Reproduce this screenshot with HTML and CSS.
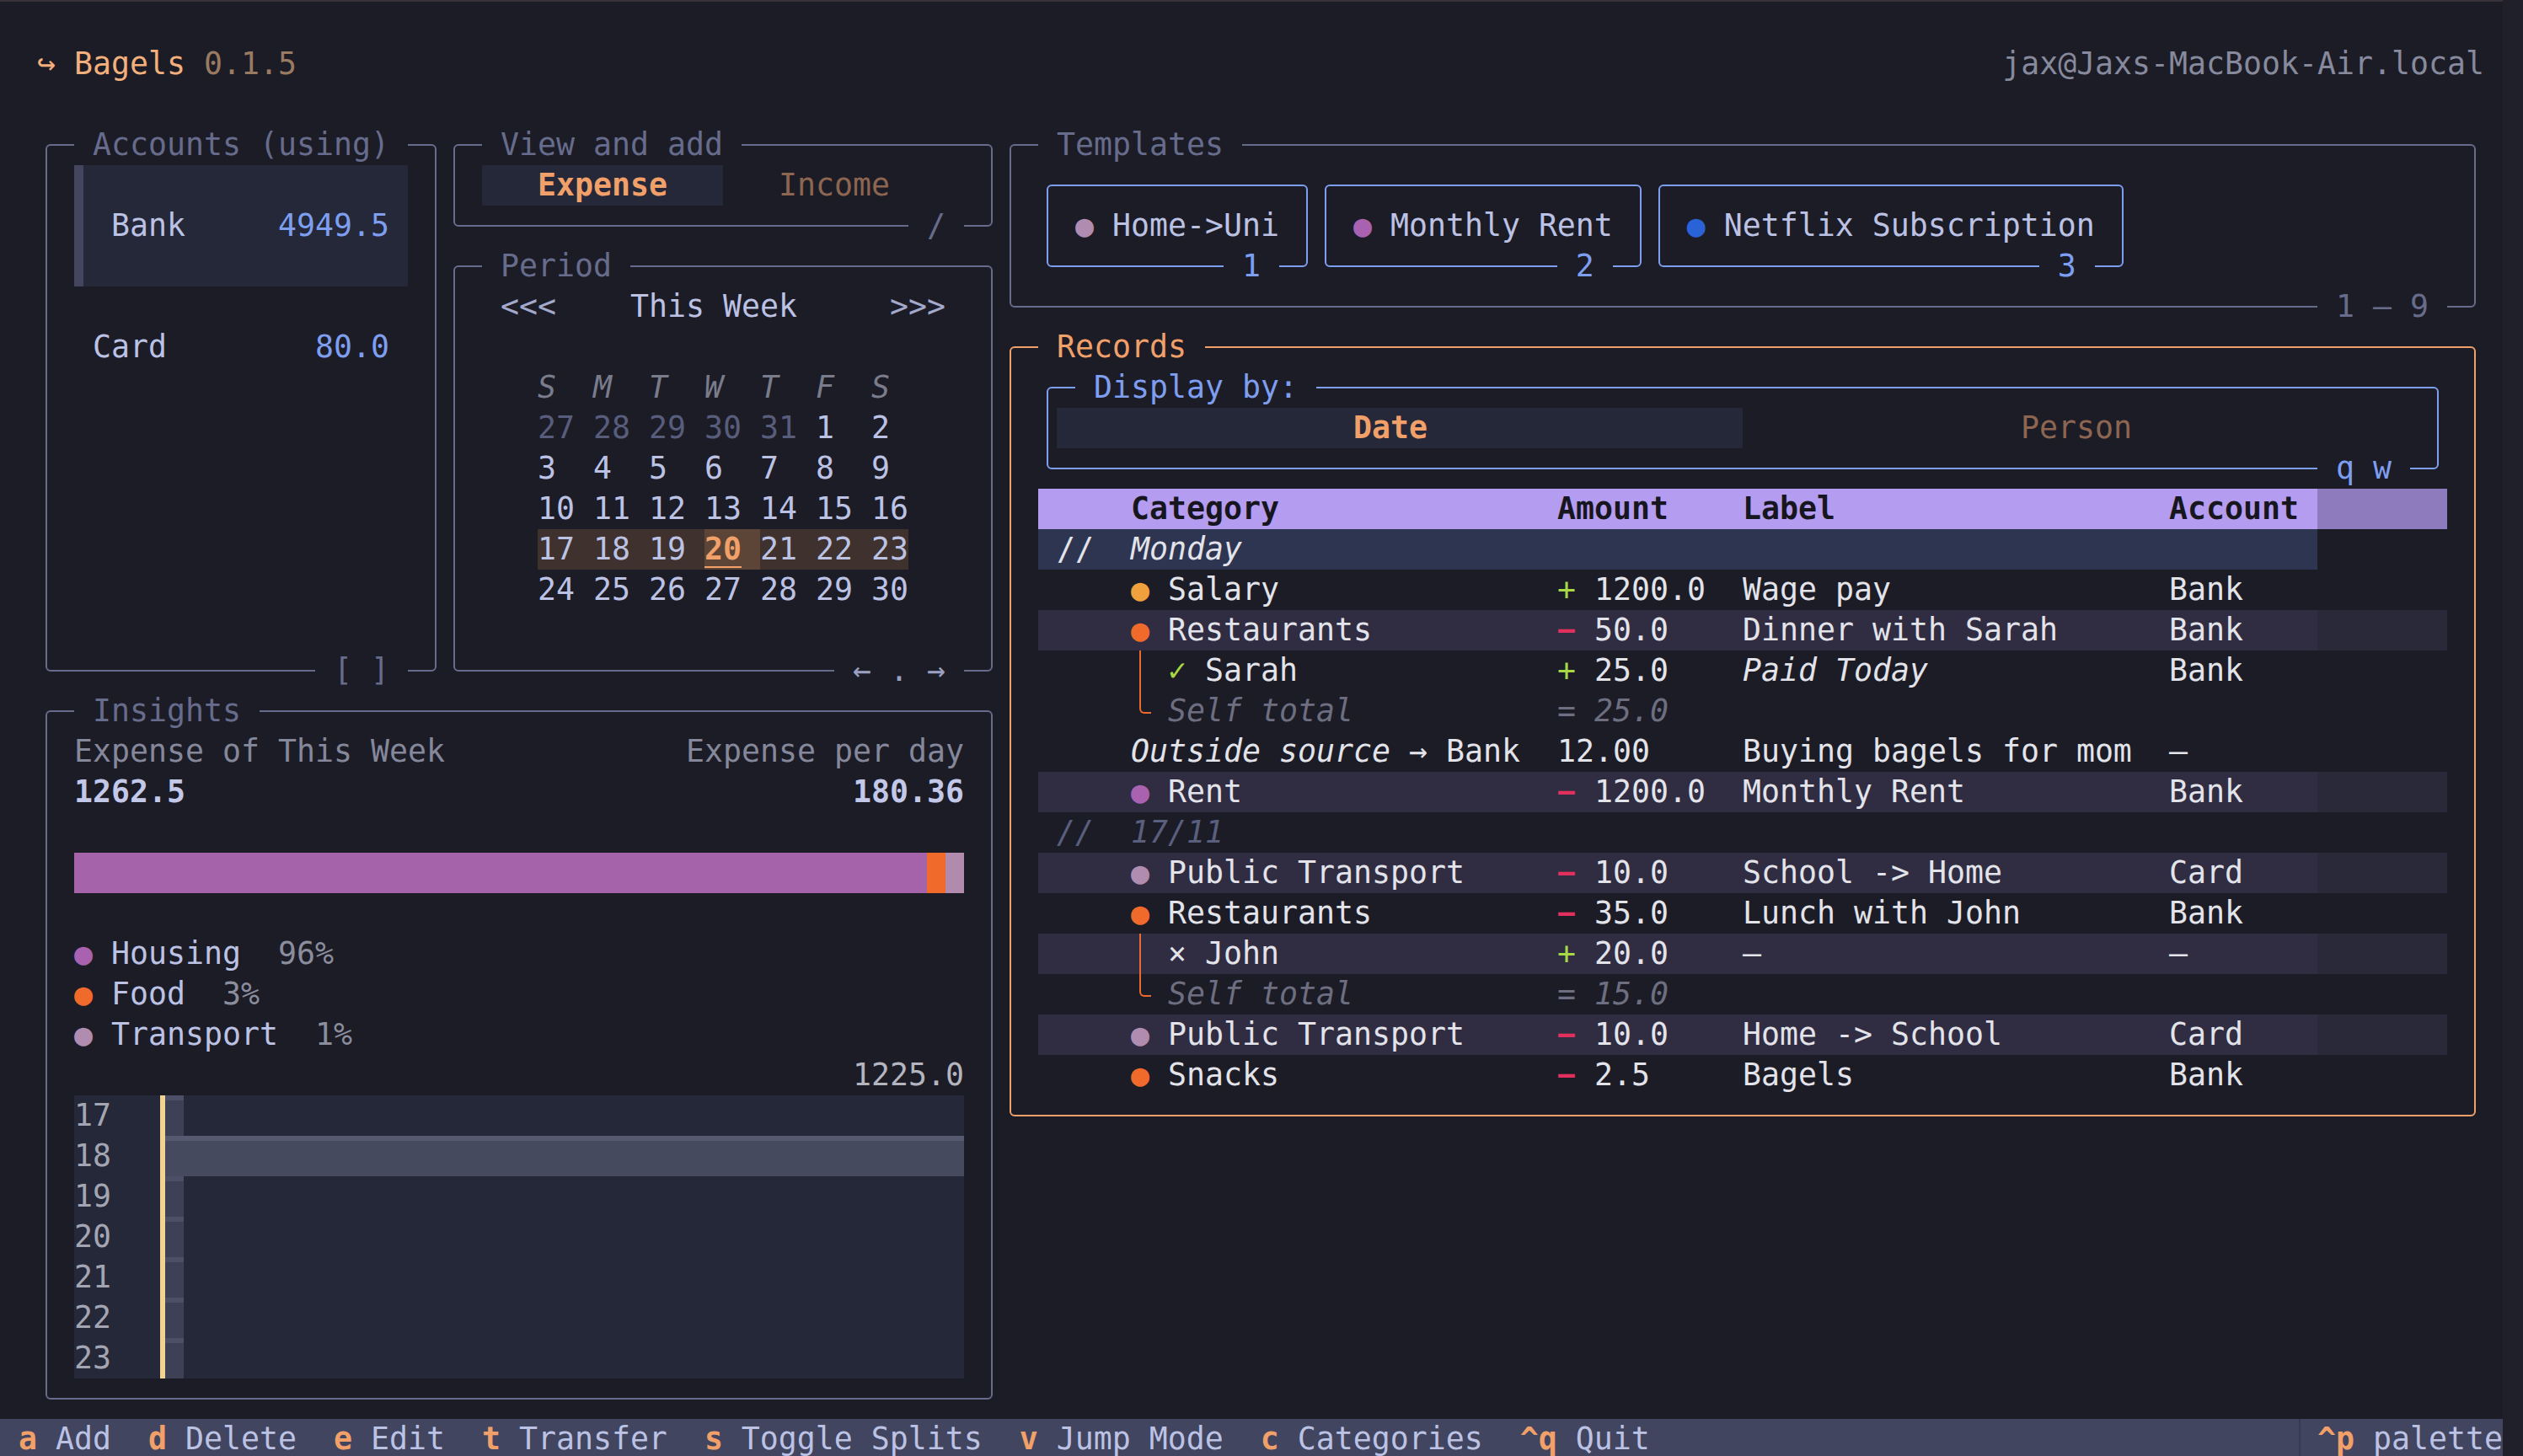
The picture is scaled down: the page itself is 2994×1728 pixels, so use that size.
FILE: index.html
```html
<!DOCTYPE html>
<html lang="en">
<head>
<meta charset="utf-8">
<title>Bagels</title>
<link rel="stylesheet" href="styles.css">
</head>
<body>
<div class="screen">
  <header class="topbar">
    <div class="brand"><span class="brand-icon">↪</span> <span class="brand-name">Bagels</span> <span class="brand-ver">0.1.5</span></div>
    <div class="host">jax@Jaxs-MacBook-Air.local</div>
  </header>

  <main class="workspace">
    <section class="panel accounts">
      <h2 class="ptitle">Accounts (using)</h2>
      <div class="acct acct-active"><span>Bank</span><span class="acct-amt">4949.5</span></div>
      <div class="acct"><span>Card</span><span class="acct-amt">80.0</span></div>
      <span class="psub">[ ]</span>
    </section>

    <section class="panel viewadd">
      <h2 class="ptitle">View and add</h2>
      <div class="tabs"><span class="tab tab-on">Expense</span><span class="tab">Income</span></div>
      <span class="psub">/</span>
    </section>

    <section class="panel period">
      <h2 class="ptitle">Period</h2>
      <div class="pnav"><span class="pnav-arrow">&lt;&lt;&lt;</span><span>This Week</span><span class="pnav-arrow">&gt;&gt;&gt;</span></div>
      <div class="cal">
        <span class="wd">S</span><span class="wd">M</span><span class="wd">T</span><span class="wd">W</span><span class="wd">T</span><span class="wd">F</span><span class="wd">S</span>
        <span class="off">27</span><span class="off">28</span><span class="off">29</span><span class="off">30</span><span class="off">31</span><span>1</span><span>2</span>
        <span>3</span><span>4</span><span>5</span><span>6</span><span>7</span><span>8</span><span>9</span>
        <span>10</span><span>11</span><span>12</span><span>13</span><span>14</span><span>15</span><span>16</span>
        <span class="wk">17</span><span class="wk">18</span><span class="wk">19</span><span class="wk today"><u>20</u></span><span class="wk">21</span><span class="wk">22</span><span class="wk">23</span>
        <span>24</span><span>25</span><span>26</span><span>27</span><span>28</span><span>29</span><span>30</span>
      </div>
      <span class="psub psub-nav">← . →</span>
    </section>

    <section class="panel insights">
      <h2 class="ptitle">Insights</h2>
      <div class="ins-row ins-label"><span>Expense of This Week</span><span>Expense per day</span></div>
      <div class="ins-row ins-value"><span>1262.5</span><span>180.36</span></div>
      <div class="share-bar">
        <span class="seg c-housing-bg" style="flex:46"></span><span class="seg c-food-bg" style="flex:1"></span><span class="seg c-transport-bg" style="flex:1"></span>
      </div>
      <ul class="legend">
        <li><span class="dot c-housing">●</span> Housing  <span class="pct">96%</span></li>
        <li><span class="dot c-food">●</span> Food  <span class="pct">3%</span></li>
        <li><span class="dot c-transport">●</span> Transport  <span class="pct">1%</span></li>
      </ul>
      <div class="ins-max">1225.0</div>
      <div class="chart">
        <div class="crow"><span class="clabel">17</span><span class="cbar cbar-min"></span></div>
        <div class="crow"><span class="clabel">18</span><span class="cbar cbar-full"></span></div>
        <div class="crow"><span class="clabel">19</span><span class="cbar cbar-min"></span></div>
        <div class="crow"><span class="clabel">20</span><span class="cbar cbar-min"></span></div>
        <div class="crow"><span class="clabel">21</span><span class="cbar cbar-min"></span></div>
        <div class="crow"><span class="clabel">22</span><span class="cbar cbar-min"></span></div>
        <div class="crow"><span class="clabel">23</span><span class="cbar cbar-min"></span></div>
      </div>
    </section>

    <section class="panel templates">
      <h2 class="ptitle">Templates</h2>
      <div class="tpl-list">
        <div class="tpl"><span class="dot c-transport">●</span> Home-&gt;Uni<span class="tpl-key">1</span></div>
        <div class="tpl"><span class="dot c-housing">●</span> Monthly Rent<span class="tpl-key">2</span></div>
        <div class="tpl"><span class="dot c-netflix">●</span> Netflix Subscription<span class="tpl-key">3</span></div>
      </div>
      <span class="psub">1 – 9</span>
    </section>

    <section class="panel records">
      <h2 class="ptitle">Records</h2>
      <div class="displayby">
        <h3 class="ptitle">Display by:</h3>
        <div class="dtabs"><span class="dtab dtab-date">Date</span><span class="dtab dtab-person">Person</span></div>
        <span class="psub">q w</span>
      </div>
      <div class="table">
        <div class="trow thead"><span></span><span>Category</span><span>Amount</span><span>Label</span><span>Account</span><span class="fill"></span></div>
        <div class="trow tgroup"><span class="pre">//</span><span class="it">Monday</span><span></span><span></span><span></span><span class="fill"></span></div>
        <div class="trow"><span></span><span><span class="dot c-salary">●</span> Salary</span><span><span class="plus">+</span> 1200.0</span><span>Wage pay</span><span>Bank</span><span class="fill"></span></div>
        <div class="trow stripe"><span></span><span><span class="dot c-food">●</span> Restaurants</span><span><span class="minus">−</span> 50.0</span><span>Dinner with Sarah</span><span>Bank</span><span class="fill"></span></div>
        <div class="trow"><span></span><span><span class="tree tree-pipe"></span><span class="plus">✓</span> Sarah</span><span><span class="plus">+</span> 25.0</span><span class="it">Paid Today</span><span>Bank</span><span class="fill"></span></div>
        <div class="trow"><span></span><span><span class="tree tree-end"></span><span class="muted it">Self total</span></span><span class="muted"><span>=</span> <span class="it">25.0</span></span><span></span><span></span><span class="fill"></span></div>
        <div class="trow"><span></span><span><span class="it">Outside source</span> → Bank</span><span>12.00</span><span>Buying bagels for mom</span><span>–</span><span class="fill"></span></div>
        <div class="trow stripe"><span></span><span><span class="dot c-housing">●</span> Rent</span><span><span class="minus">−</span> 1200.0</span><span>Monthly Rent</span><span>Bank</span><span class="fill"></span></div>
        <div class="trow tgroup-dim"><span class="pre">//</span><span>17/11</span><span></span><span></span><span></span><span class="fill"></span></div>
        <div class="trow stripe"><span></span><span><span class="dot c-transport">●</span> Public Transport</span><span><span class="minus">−</span> 10.0</span><span>School -&gt; Home</span><span>Card</span><span class="fill"></span></div>
        <div class="trow"><span></span><span><span class="dot c-food">●</span> Restaurants</span><span><span class="minus">−</span> 35.0</span><span>Lunch with John</span><span>Bank</span><span class="fill"></span></div>
        <div class="trow stripe"><span></span><span><span class="tree tree-pipe"></span>× John</span><span><span class="plus">+</span> 20.0</span><span>–</span><span>–</span><span class="fill"></span></div>
        <div class="trow"><span></span><span><span class="tree tree-end"></span><span class="muted it">Self total</span></span><span class="muted"><span>=</span> <span class="it">15.0</span></span><span></span><span></span><span class="fill"></span></div>
        <div class="trow stripe"><span></span><span><span class="dot c-transport">●</span> Public Transport</span><span><span class="minus">−</span> 10.0</span><span>Home -&gt; School</span><span>Card</span><span class="fill"></span></div>
        <div class="trow"><span></span><span><span class="dot c-food">●</span> Snacks</span><span><span class="minus">−</span> 2.5</span><span>Bagels</span><span>Bank</span><span class="fill"></span></div>
      </div>
    </section>
  </main>

  <footer class="footer">
    <div class="keys">
      <span class="key"><b>a</b> Add</span>
      <span class="key"><b>d</b> Delete</span>
      <span class="key"><b>e</b> Edit</span>
      <span class="key"><b>t</b> Transfer</span>
      <span class="key"><b>s</b> Toggle Splits</span>
      <span class="key"><b>v</b> Jump Mode</span>
      <span class="key"><b>c</b> Categories</span>
      <span class="key"><b>^q</b> Quit</span>
    </div>
    <div class="palette"><b>^p</b> palette</div>
  </footer>
</div>
</body>
</html>
```

FILE: styles.css
```css
:root {
  --bg: #1c1c27;
  --line: #676c8c;
  --fg: #bcc2e4;
  --white: #e3e3ea;
  --blue: #7e9ff0;
  --orange: #f2a06a;
  --brown: #8d6651;
  --sel: #252838;
}

* { box-sizing: border-box; margin: 0; padding: 0; }

html, body { background: #20202b; overflow: hidden; }

body {
  margin: 0;
  font-family: "DejaVu Sans Mono", "Liberation Mono", monospace;
  font-size: 36.54px;
  line-height: 48px;
  color: var(--fg);
}

h2, h3 { font: inherit; }
ul { list-style: none; }
b { font-weight: bold; }

.screen {
  position: relative;
  width: 2970px;
  height: 1732px;
  padding-top: 52px;
  display: flex;
  flex-direction: column;
  background: var(--bg);
  overflow: hidden;
}

.screen::before {
  content: "";
  position: absolute;
  left: 0; right: 0; top: 0;
  height: 2px;
  background: #3a323a;
}

/* ---------- header ---------- */
.topbar {
  height: 48px;
  display: flex;
  justify-content: space-between;
  padding: 0 22px 0 44px;
  white-space: pre;
}
.brand-icon, .brand-name { color: #f4b07c; }
.brand-ver { color: #9b7a62; }
.host { color: #868a9c; }

/* ---------- workspace grid ---------- */
.workspace {
  margin-top: 48px;
  padding-left: 44px;
  display: grid;
  grid-template-columns: 484px 660px 1760px;
  grid-template-rows: repeat(32, 48px);
}

.accounts  { grid-column: 1; grid-row: 1 / span 14; padding: 48px 44px; }
.viewadd   { grid-column: 2; grid-row: 1 / span 3; padding: 48px 44px 0; }
.period    { grid-column: 2; grid-row: 4 / span 11; padding: 48px 0 0 66px; }
.insights  { grid-column: 1 / span 2; grid-row: 15 / span 18; padding: 48px 44px; display: flex; flex-direction: column; }
.templates { grid-column: 3; grid-row: 1 / span 5; padding: 48px 44px; }
.records   { grid-column: 3; grid-row: 6 / span 20; padding: 48px 44px; }

/* ---------- panel chrome ---------- */
.panel, .displayby, .tpl { position: relative; }

.panel::before, .displayby::before, .tpl::before {
  content: "";
  position: absolute;
  inset: 23px 10px;
  border: 2px solid var(--line);
  border-radius: 6px;
  pointer-events: none;
}

.ptitle {
  position: absolute;
  top: 0;
  left: 44px;
  padding: 0 22px;
  background: var(--bg);
  color: var(--line);
  white-space: pre;
}

.psub {
  position: absolute;
  bottom: 0;
  right: 44px;
  padding: 0 22px;
  background: var(--bg);
  color: var(--line);
  white-space: pre;
}

/* ---------- accounts ---------- */
.acct {
  height: 144px;
  display: flex;
  align-items: center;
  justify-content: space-between;
  padding: 0 22px;
}
.acct-active {
  background: var(--sel);
  border-left: 11px solid #43465e;
  padding-left: 33px;
}
.acct-amt { color: var(--blue); }

/* ---------- view and add ---------- */
.tabs { display: flex; }
.tab {
  width: 286px;
  padding-left: 66px;
  color: var(--brown);
}
.tab-on {
  background: var(--sel);
  color: var(--orange);
  font-weight: bold;
}

/* ---------- period ---------- */
.pnav {
  display: grid;
  grid-template-columns: 154px 308px auto;
}
.pnav-arrow { color: #a3a9cb; }

.cal {
  margin-top: 48px;
  margin-left: 44px;
  display: grid;
  grid-template-columns: repeat(6, 66px) 44px;
  grid-auto-rows: 48px;
}
.cal .wd { font-style: italic; color: #7a7c8c; }
.cal .off { color: #585d7c; }
.cal .wk { background: #3e312e; }
.cal .today { background: #5c4536; color: var(--orange); font-weight: bold; }
.cal .today u {
  text-decoration: underline;
  text-decoration-thickness: 2px;
  text-underline-offset: 8px;
}
.psub-nav { color: #9aa0c2; }

/* ---------- insights ---------- */
.ins-row { display: flex; justify-content: space-between; height: 48px; }
.ins-label { color: #85879a; }
.ins-value { font-weight: bold; color: #c3c8e8; }

.share-bar {
  margin-top: 48px;
  height: 48px;
  display: flex;
}
.seg { height: 48px; }
.c-housing-bg { background: #a563a9; }
.c-food-bg { background: #f06a2c; }
.c-transport-bg { background: #b08bae; }

.legend { margin-top: 48px; }
.legend li { height: 48px; white-space: pre; }
.pct { color: #8b8d9c; }

.ins-max { text-align: right; color: #b4b5bf; }

.chart { background: #252839; }
.crow { display: flex; height: 48px; }
.clabel {
  width: 108px;
  border-right: 6px solid #f3d391;
  color: #a4a5b2;
}
.cbar {
  height: 48px;
  background: #3e4156;
  border-top: 6px solid #4c4f65;
}
.cbar-min { width: 22px; }
.cbar-full { flex: 1; background: #464a5f; border-top-color: #565a71; }

/* ---------- dots / colours ---------- */
.dot { font-style: normal; }
.c-housing { color: #a862b0; }
.c-food { color: #f06b2b; }
.c-transport { color: #b08cb0; }
.c-salary { color: #f0a13e; }
.c-netflix { color: #2a62d8; }

/* ---------- templates ---------- */
.tpl-list { display: flex; }
.tpl {
  height: 144px;
  padding: 48px 44px;
  white-space: pre;
}
.tpl::before { border-color: var(--blue); }
.tpl-key {
  position: absolute;
  bottom: 0;
  right: 44px;
  padding: 0 22px;
  background: var(--bg);
  color: var(--blue);
}

/* ---------- records ---------- */
.records::before { border-color: #f2a06a; }
.records > .ptitle { color: var(--orange); }

.displayby {
  height: 144px;
  padding: 48px 22px 0;
}
.displayby::before { border-color: var(--blue); }
.displayby .ptitle, .displayby .psub { color: var(--blue); }

.dtabs { display: flex; }
.dtab { width: 814px; }
.dtab-date {
  background: var(--sel);
  color: var(--orange);
  font-weight: bold;
  padding-left: 352px;
}
.dtab-person { color: var(--brown); padding-left: 330px; }

.table { color: var(--white); }
.trow {
  display: grid;
  grid-template-columns: 110px 506px 220px 506px 176px 154px;
  height: 48px;
  white-space: pre;
}
.trow .pre { padding-left: 22px; }

.thead { background: #b49cf0; color: #17161f; font-weight: bold; }
.thead .fill { background: #8e7bbd; }

.tgroup { background: #2e3551; }
.tgroup .fill { background: var(--bg); }
.tgroup-dim { color: #5a5f7e; font-style: italic; }

.stripe { background: #302d43; }
.stripe .fill { background: #2a293a; }

.it { font-style: italic; }
.muted { color: #6d6e80; }
.plus { color: #a8d843; }
.minus { color: #e2305e; font-weight: bold; }

.tree {
  display: inline-block;
  position: relative;
  width: 44px;
  height: 48px;
  vertical-align: top;
}
.tree::before {
  content: "";
  position: absolute;
  left: 10px;
  top: 0;
}
.tree-pipe::before {
  bottom: 0;
  width: 2px;
  background: #ec6a2e;
}
.tree-end::before {
  width: 12px;
  height: 25px;
  border-left: 2px solid #ec6a2e;
  border-bottom: 2px solid #ec6a2e;
  border-bottom-left-radius: 6px;
}

/* ---------- footer ---------- */
.footer {
  margin-top: auto;
  height: 48px;
  flex: none;
  display: flex;
  justify-content: space-between;
  background: #41455f;
  white-space: pre;
}
.keys { display: flex; }
.key { padding: 0 22px; color: var(--fg); }
.key b, .palette b { color: var(--orange); }
.palette {
  padding-left: 20px;
  border-left: 2px solid #363a52;
  width: 242px;
}
```
